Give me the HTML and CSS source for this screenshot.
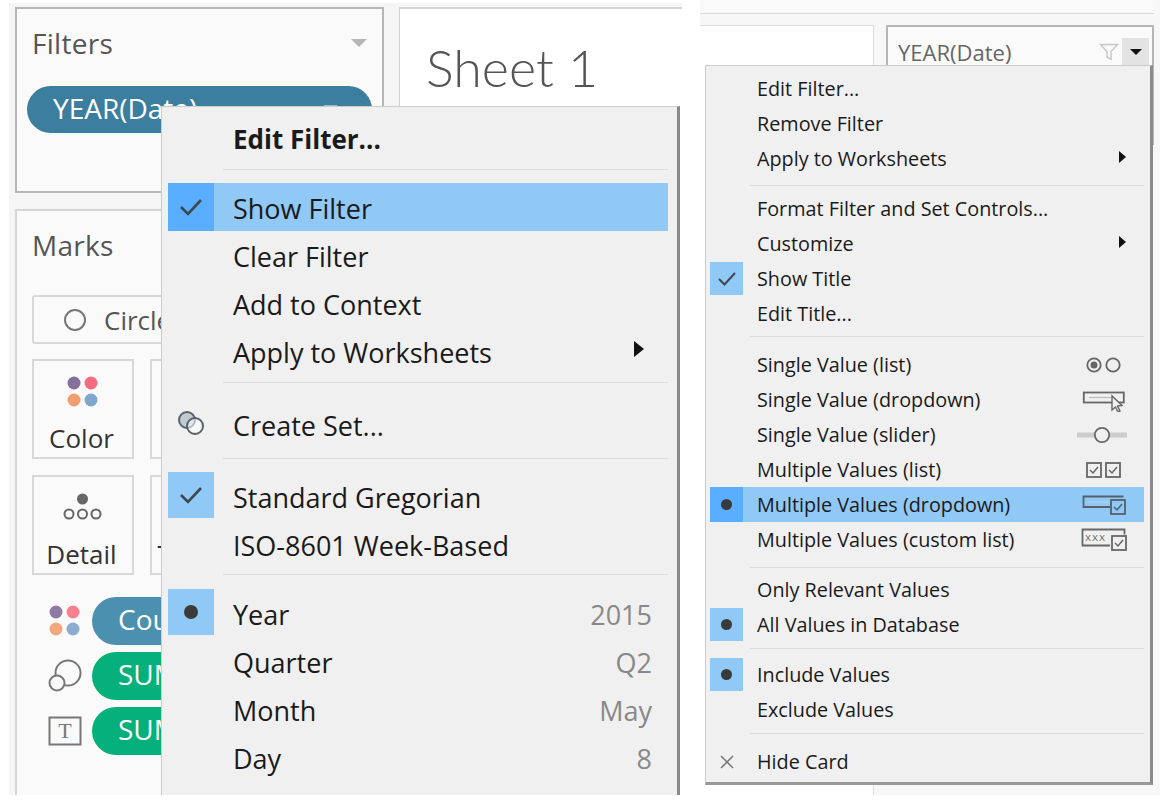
FILE: index.html
```html
<!DOCTYPE html>
<html lang="en">
<head>
  <meta charset="UTF-8">
  <title>Filter Menus</title>
  <link rel="stylesheet" href="styles.css">
</head>
<body>
  <div class="shot shot-left">
    <div class="sidebar">
      <section class="card card-filters">
        <div class="card-head">
          <span class="card-title">Filters</span>
          <span class="caret-grey"></span>
        </div>
        <div class="pill pill-filter">YEAR(Date)<span class="pill-caret"></span></div>
      </section>
      <section class="card card-marks">
        <div class="card-head"><span class="card-title">Marks</span></div>
        <div class="mark-type">
          <svg width="24" height="24" viewBox="0 0 24 24"><circle cx="12" cy="12" r="10" fill="none" stroke="#777" stroke-width="2"/></svg>
          <span>Circle</span>
        </div>
        <div class="mark-grid">
          <div class="mark-btn">
            <svg width="40" height="40" viewBox="0 0 40 40">
              <circle cx="12" cy="11" r="6.5" fill="#85709c"/>
              <circle cx="29" cy="11" r="6.5" fill="#f76b80"/>
              <circle cx="12" cy="28" r="6.5" fill="#f0a070"/>
              <circle cx="29" cy="28" r="6.5" fill="#7ea6cf"/>
            </svg>
            <span>Color</span>
          </div>
          <div class="mark-btn"><span>Size</span></div>
          <div class="mark-btn">
            <svg width="40" height="40" viewBox="0 0 40 40">
              <circle cx="20.5" cy="11" r="5.5" fill="#666"/>
              <circle cx="7" cy="26" r="4.5" fill="none" stroke="#666" stroke-width="2"/>
              <circle cx="20.5" cy="26" r="4.5" fill="none" stroke="#666" stroke-width="2"/>
              <circle cx="34" cy="26" r="4.5" fill="none" stroke="#666" stroke-width="2"/>
            </svg>
            <span>Detail</span>
          </div>
          <div class="mark-btn"><span>Tooltip</span></div>
        </div>
        <div class="field-rows">
          <div class="field-row">
            <svg width="34" height="34" viewBox="0 0 34 34">
              <circle cx="8" cy="8" r="6.5" fill="#8d7ba4"/>
              <circle cx="25" cy="8" r="6.5" fill="#f9808f"/>
              <circle cx="8" cy="25" r="6.5" fill="#f0a87c"/>
              <circle cx="25" cy="25" r="6.5" fill="#8eaccf"/>
            </svg>
            <div class="pill pill-blue">Count</div>
          </div>
          <div class="field-row">
            <svg width="34" height="34" viewBox="0 0 34 34">
              <circle cx="20" cy="14" r="12.5" fill="none" stroke="#777" stroke-width="2"/>
              <circle cx="9" cy="24" r="7.5" fill="#fafafa" stroke="#777" stroke-width="2"/>
            </svg>
            <div class="pill pill-green">SUM</div>
          </div>
          <div class="field-row">
            <svg width="34" height="30" viewBox="0 0 34 30">
              <rect x="1.5" y="1.5" width="31" height="27" fill="none" stroke="#777" stroke-width="2"/>
              <text x="17" y="22" text-anchor="middle" class="t-glyph">T</text>
            </svg>
            <div class="pill pill-green">SUM</div>
          </div>
        </div>
      </section>
    </div>
    <section class="sheet">
      <h1 class="sheet-title">Sheet 1</h1>
    </section>

    <div class="menu menu-big">
      <div class="row row-bold"><span class="tick"></span><span class="label">Edit Filter...</span></div>
      <div class="sep sep-first"></div>
      <div class="row row-on">
        <span class="tick tick-strong">
          <svg width="24" height="20" viewBox="0 0 24 20"><path d="M2 10l7 7L22 3" fill="none" stroke="#3d474e" stroke-width="2.6"/></svg>
        </span>
        <span class="label">Show Filter</span>
      </div>
      <div class="row"><span class="tick"></span><span class="label">Clear Filter</span></div>
      <div class="row"><span class="tick"></span><span class="label">Add to Context</span></div>
      <div class="row">
        <span class="tick"></span><span class="label">Apply to Worksheets</span>
        <span class="arrow"></span>
      </div>
      <div class="sep sep-tall"></div>
      <div class="row">
        <span class="tick">
          <svg width="30" height="30" viewBox="0 0 30 30">
            <circle cx="11" cy="11" r="8" fill="#c2cad2" stroke="#58626c" stroke-width="2"/>
            <circle cx="19" cy="17" r="8" fill="#fff" fill-opacity=".55" stroke="#58626c" stroke-width="2"/>
          </svg>
        </span>
        <span class="label">Create Set...</span>
      </div>
      <div class="sep sep-mid"></div>
      <div class="row">
        <span class="tick tick-box">
          <svg width="24" height="20" viewBox="0 0 24 20"><path d="M2 10l7 7L22 3" fill="none" stroke="#3d474e" stroke-width="2.6"/></svg>
        </span>
        <span class="label">Standard Gregorian</span>
      </div>
      <div class="row"><span class="tick"></span><span class="label">ISO-8601 Week-Based</span></div>
      <div class="sep sep-short"></div>
      <div class="row">
        <span class="tick tick-box"><span class="dot"></span></span>
        <span class="label">Year</span><span class="value">2015</span>
      </div>
      <div class="row"><span class="tick"></span><span class="label">Quarter</span><span class="value">Q2</span></div>
      <div class="row"><span class="tick"></span><span class="label">Month</span><span class="value">May</span></div>
      <div class="row"><span class="tick"></span><span class="label">Day</span><span class="value">8</span></div>
    </div>
  </div>

  <div class="shot shot-right">
    <div class="top-strip"></div>
    <div class="work">
      <div class="view"></div>
      <div class="filter-card">
        <span class="filter-name">YEAR(Date)</span>
        <svg class="funnel" width="20" height="18" viewBox="0 0 20 18"><path d="M1.500 1.500h17l-6.500 7v8l-4-2.500V8.500z" fill="none" stroke="#c8c8c8" stroke-width="1.500"/></svg>
        <span class="filter-btn"><span class="caret-black"></span></span>
      </div>
    </div>

    <div class="menu menu-small">
      <div class="row"><span class="tick"></span><span class="label">Edit Filter...</span></div>
      <div class="row"><span class="tick"></span><span class="label">Remove Filter</span></div>
      <div class="row"><span class="tick"></span><span class="label">Apply to Worksheets</span><span class="arrow"></span></div>
      <div class="sep"></div>
      <div class="row"><span class="tick"></span><span class="label">Format Filter and Set Controls...</span></div>
      <div class="row"><span class="tick"></span><span class="label">Customize</span><span class="arrow"></span></div>
      <div class="row">
        <span class="tick tick-box">
          <svg width="20" height="16" viewBox="0 0 20 16"><path d="M2 8l5.500 5.500L18 2" fill="none" stroke="#3d474e" stroke-width="2"/></svg>
        </span>
        <span class="label">Show Title</span>
      </div>
      <div class="row"><span class="tick"></span><span class="label">Edit Title...</span></div>
      <div class="sep sep-a"></div>
      <div class="row">
        <span class="tick"></span><span class="label">Single Value (list)</span>
        <svg class="kind" width="50" height="24" viewBox="0 0 50 24">
          <circle cx="16" cy="12" r="6.700" fill="none" stroke="#666" stroke-width="1.800"/>
          <circle cx="16" cy="12" r="3.500" fill="#666"/>
          <circle cx="35" cy="12" r="6.700" fill="none" stroke="#666" stroke-width="1.800"/>
        </svg>
      </div>
      <div class="row">
        <span class="tick"></span><span class="label">Single Value (dropdown)</span>
        <svg class="kind" width="50" height="24" viewBox="0 0 50 24">
          <rect x="5.800" y="4.500" width="40" height="10" fill="none" stroke="#666" stroke-width="1.800"/>
          <path d="M11 9.500h22" stroke="#bbb" stroke-width="1.200"/>
          <path d="M34 8l0 14 3.500-3 2.500 5 2-1-2.500-5 4.500-.5z" fill="#f0f0f0" stroke="#666" stroke-width="1.400"/>
        </svg>
      </div>
      <div class="row">
        <span class="tick"></span><span class="label">Single Value (slider)</span>
        <svg class="kind" width="52" height="24" viewBox="0 0 52 24">
          <rect x="1" y="9.500" width="50" height="5" fill="#ccc"/>
          <circle cx="26" cy="12" r="7.200" fill="#f0f0f0" stroke="#666" stroke-width="1.800"/>
        </svg>
      </div>
      <div class="row">
        <span class="tick"></span><span class="label">Multiple Values (list)</span>
        <svg class="kind" width="50" height="24" viewBox="0 0 50 24">
          <rect x="9" y="5" width="14" height="14" fill="none" stroke="#666" stroke-width="1.800"/>
          <path d="M12 12l3 3 5-6" fill="none" stroke="#666" stroke-width="1.500"/>
          <rect x="28" y="5" width="14" height="14" fill="none" stroke="#666" stroke-width="1.800"/>
          <path d="M31 12l3 3 5-6" fill="none" stroke="#666" stroke-width="1.500"/>
        </svg>
      </div>
      <div class="row row-on">
        <span class="tick tick-strong"><span class="dot dot-small"></span></span>
        <span class="label">Multiple Values (dropdown)</span>
        <svg class="kind" width="50" height="24" viewBox="0 0 50 24">
          <path d="M32 14H5.500V3.500h40" fill="none" stroke="#55616a" stroke-width="1.800"/>
          <path d="M10 9h20" stroke="#b5cfe6" stroke-width="1.200"/>
          <rect x="33" y="7" width="14" height="14" fill="none" stroke="#55616a" stroke-width="1.800"/>
          <path d="M36 14l3 3 5-6" fill="none" stroke="#55616a" stroke-width="1.500"/>
        </svg>
      </div>
      <div class="row">
        <span class="tick"></span><span class="label">Multiple Values (custom list)</span>
        <svg class="kind" width="50" height="24" viewBox="0 0 50 24">
          <path d="M32 17.500H4.500V1.500h42v5" fill="none" stroke="#666" stroke-width="1.800"/>
          <text x="7" y="13" class="x-glyph">XXX</text>
          <rect x="34" y="8" width="14" height="14" fill="#f0f0f0" stroke="#666" stroke-width="1.800"/>
          <path d="M37 15l3 3 5-6" fill="none" stroke="#666" stroke-width="1.500"/>
        </svg>
      </div>
      <div class="sep sep-b"></div>
      <div class="row"><span class="tick"></span><span class="label">Only Relevant Values</span></div>
      <div class="row"><span class="tick tick-box"><span class="dot dot-small"></span></span><span class="label">All Values in Database</span></div>
      <div class="sep sep-c"></div>
      <div class="row"><span class="tick tick-box"><span class="dot dot-small"></span></span><span class="label">Include Values</span></div>
      <div class="row"><span class="tick"></span><span class="label">Exclude Values</span></div>
      <div class="sep sep-d"></div>
      <div class="row">
        <span class="tick">
          <svg width="16" height="16" viewBox="0 0 16 16"><path d="M2 2l12 12M14 2L2 14" stroke="#777" stroke-width="1.500"/></svg>
        </span>
        <span class="label">Hide Card</span>
      </div>
    </div>
  </div>
</body>
</html>
```

FILE: styles.css
```css
body {
  margin: 0;
  width: 1160px;
  height: 808px;
  overflow: hidden;
  display: flex;
  align-items: flex-start;
  background: #fff;
  font-family: "Open Sans", "Noto Sans", sans-serif;
  color: #1a1a1a;
}
.shot {
  position: relative;
  overflow: hidden;
}
.shot-left {
  display: flex;
  gap: 15px;
  margin: 3px 0 0 9px;
  padding: 4px 0 0 6px;
  width: 667px;
  height: 788px;
  background: #f5f5f5;
}
.shot-right {
  margin-left: 18px;
  width: 460px;
  height: 795px;
  background: #f7f7f7;
}

/* left side cards */
.sidebar {
  width: 369px;
  flex: none;
  display: flex;
  flex-direction: column;
  gap: 16px;
}
.card {
  background: #fafafa;
  box-sizing: border-box;
}
.card-filters {
  height: 186px;
  border: 2px solid #b6b6b6;
}
.card-marks {
  flex: 1;
  border: 2px solid #d6d6d6;
  border-bottom: none;
  padding: 0 15px;
}
.card-head {
  display: flex;
  justify-content: space-between;
  align-items: center;
  padding: 16px 15px 1px 15px;
  height: 36px;
}
.card-marks .card-head {
  padding-left: 0;
}
.card-title {
  font-size: 28px;
  letter-spacing: .3px;
  color: #555;
}
.caret-grey {
  border-left: 8px solid transparent;
  border-right: 8px solid transparent;
  border-top: 8px solid #b5b5b5;
}
.pill {
  box-sizing: border-box;
  height: 47px;
  line-height: 45px;
  border-radius: 24px;
  padding-left: 26px;
  color: #fff;
  font-size: 28px;
  white-space: nowrap;
}
.pill-filter {
  position: relative;
  margin: 24px 10px 0;
  background: #3c7e9e;
}
.pill-caret {
  position: absolute;
  right: 35px;
  top: 19px;
  width: 13px;
  height: 6px;
  background: #9dbccb;
}
.pill-blue {
  background: #4c90b0;
}
.pill-green {
  background: #05b07a;
}
.mark-type {
  display: flex;
  align-items: center;
  gap: 17px;
  box-sizing: border-box;
  height: 49px;
  margin-top: 31px;
  padding-left: 29px;
  border: 2px solid #d8d8d8;
  border-radius: 3px;
  font-size: 26px;
  color: #555;
}
.mark-grid {
  display: grid;
  grid-template-columns: repeat(2, 102px);
  grid-auto-rows: 100px;
  gap: 16px;
  margin-top: 15px;
}
.mark-btn {
  box-sizing: border-box;
  display: flex;
  flex-direction: column;
  align-items: center;
  justify-content: flex-end;
  padding: 0 3px 1px 0;
  border: 2px solid #d8d8d8;
  font-size: 26px;
  color: #333;
}
.mark-btn svg {
  margin-bottom: 8px;
}
.field-rows {
  display: flex;
  flex-direction: column;
  gap: 7px;
  margin-top: 22px;
}
.field-row {
  display: flex;
  align-items: center;
  gap: 10px;
  padding-left: 16px;
}
.field-row .pill {
  flex: 1;
  height: 48px;
}
.t-glyph {
  font-family: "Liberation Serif", serif;
  font-size: 22px;
  fill: #777;
}
.x-glyph {
  font-family: "Liberation Sans", sans-serif;
  font-size: 9px;
  letter-spacing: 1px;
  fill: #666;
}
.sheet {
  flex: 1;
  background: #fff;
  border-top: 2px solid #d4d4d4;
  border-left: 1px solid #d0d0d0;
}
.sheet-title {
  margin: 26px 0 0 26px;
  font-family: Lato, "Open Sans", sans-serif;
  font-size: 52px;
  line-height: 64px;
  font-weight: 300;
  color: #555;
}

/* context menus */
.menu {
  position: absolute;
  box-sizing: border-box;
  background: #f0f0f0;
  border: 1px solid #ccc;
}
.menu-big {
  left: 152px;
  top: 103px;
  width: 519px;
  height: 700px;
  padding: 7px 9px 0 6px;
  border-right: 3px solid #8a8a8a;
}
.menu-small {
  left: 5px;
  top: 65px;
  width: 448px;
  height: 720px;
  padding: 5px 6px 0 4px;
  border-right: 3px solid #8a8a8a;
  border-bottom: 3px solid #999;
}
.row {
  display: flex;
  align-items: center;
  white-space: nowrap;
}
.menu-big .row {
  height: 48px;
  font-size: 27px;
  padding-right: 16px;
}
.menu-big .row-bold {
  font-size: 26px;
  font-weight: 700;
}
.menu-small .row {
  height: 35px;
  font-size: 19.8px;
  padding-right: 16px;
}
.row-on {
  background: #90c8f6;
}
.tick {
  flex: none;
  display: flex;
  align-items: center;
  justify-content: center;
}
.menu-big .tick {
  width: 46px;
  height: 46px;
  margin-right: 19px;
}
.menu-big .tick-box {
  align-self: flex-start;
}
.menu-small .tick {
  width: 33px;
  height: 33px;
  margin-right: 14px;
}
.tick-box {
  background: #90c8f6;
}
.menu-big .tick-strong,
.menu-small .tick-strong {
  height: 100%;
  background: #5aaeff;
}
.dot {
  width: 14px;
  height: 14px;
  border-radius: 50%;
  background: #3a3a3a;
}
.dot-small {
  width: 11px;
  height: 11px;
}
.label {
  flex: 1;
}
.menu-big .label,
.menu-big .value {
  padding-top: 2px;
}
.value {
  color: #888;
}
.kind {
  flex: none;
}
.arrow {
  border-top: 6px solid transparent;
  border-bottom: 6px solid transparent;
  border-left: 7px solid #111;
  margin-top: -4px;
}
.menu-big .arrow {
  margin-right: 8px;
  border-top-width: 8px;
  border-bottom-width: 8px;
  border-left-width: 10px;
}
.menu-small .arrow {
  margin-right: 2px;
}
.sep {
  height: 1px;
  background: #dcdcdc;
}
.menu-big .sep-first {
  margin: 7px 0 13px 55px;
}
.menu-big .sep-tall {
  margin: 7px 0 17px 55px;
}
.menu-big .sep-mid {
  margin: 10px 0 13px 55px;
}
.menu-big .sep-short {
  margin: 6px 0 14px 55px;
}
.menu-small .sep {
  margin: 9px 0 5px 40px;
}
.menu-small .sep-a {
  margin: 5px 0 10px 40px;
}
.menu-small .sep-b {
  margin: 10px 0 4px 40px;
}
.menu-small .sep-c {
  margin: 6px 0 8px 40px;
}
.menu-small .sep-d {
  margin: 6px 0 10px 40px;
}

/* right side */
.top-strip {
  height: 13px;
  margin-right: 6px;
  background: #fafafa;
  border-bottom: 1px solid #d8d8d8;
}
.work {
  display: flex;
  gap: 12px;
  align-items: flex-start;
  padding-top: 11px;
}
.view {
  width: 174px;
  height: 770px;
  box-sizing: border-box;
  background: #fff;
  border-top: 1px solid #ddd;
  border-right: 1px solid #ddd;
}
.filter-card {
  box-sizing: border-box;
  display: flex;
  align-items: flex-start;
  width: 268px;
  height: 120px;
  padding: 11px 3px 0 10px;
  background: #fafafa;
  border: 2px solid #b6b6b6;
}
.filter-name {
  flex: 1;
  font-size: 22px;
  line-height: 28px;
  color: #666;
}
.funnel {
  margin: 5px 3px 0 0;
}
.filter-btn {
  display: flex;
  align-items: center;
  justify-content: center;
  width: 27px;
  height: 27px;
  background: #e3e3e3;
}
.caret-black {
  border-left: 6px solid transparent;
  border-right: 6px solid transparent;
  border-top: 6px solid #111;
}
```
